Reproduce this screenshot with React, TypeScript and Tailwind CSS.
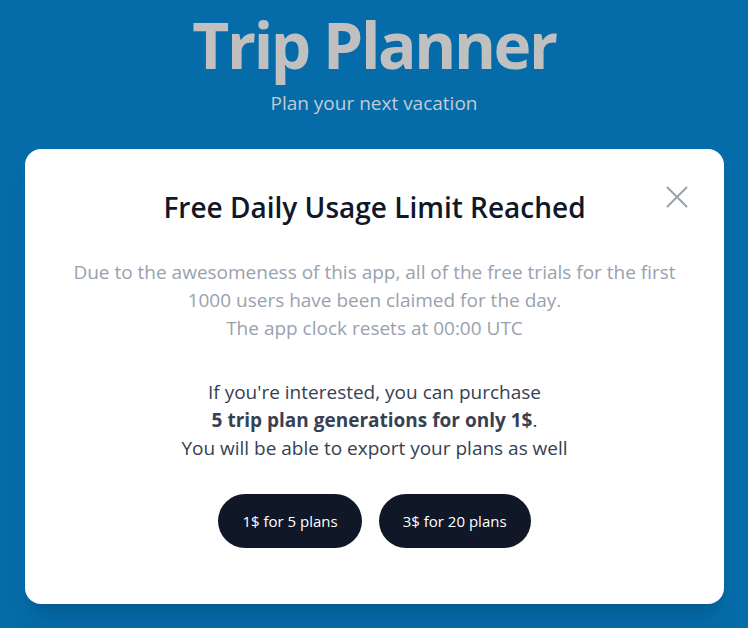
import React from "react";

function CloseIcon() {
  return (
    <svg width="22" height="22" viewBox="0 0 22 22" fill="none" stroke="currentColor" strokeWidth="2" strokeLinecap="round">
      <path d="M1.5 1.5L20.5 20.5M20.5 1.5L1.5 20.5" />
    </svg>
  );
}

export default function App() {
  return (
    <div
      className="min-h-screen bg-[#056ca9] flex flex-col items-center"
      style={{ fontFamily: "'Open Sans', sans-serif" }}
    >
      <h1 className="mt-[13px] text-[64px] font-bold leading-none tracking-[-2.4px] text-[#c0c0c0]">
        Trip Planner
      </h1>
      <p className="mt-[12px] text-[19px] leading-7 text-[#c3cbd3]">Plan your next vacation</p>
      <div className="relative mt-[32px] self-stretch ml-[25px] mr-[24px] rounded-2xl bg-white shadow-xl pt-[40px] pb-[56px] px-8 text-center">
        <button className="absolute right-[36px] top-[37px] text-gray-400">
          <CloseIcon />
        </button>
        <h2 className="text-[28px] leading-9 font-semibold text-gray-900">Free Daily Usage Limit Reached</h2>
        <p className="mt-[33px] text-[19px] leading-7 text-gray-400">
          Due to the awesomeness of this app, all of the free trials for the first
          <br />
          1000 users have been claimed for the day.
          <br />
          The app clock resets at 00:00 UTC
        </p>
        <p className="mt-[36px] text-[19px] leading-7 text-gray-700">
          If you're interested, you can purchase
          <br />
          <span className="font-bold">5 trip plan generations for only 1$</span>.
          <br />
          You will be able to export your plans as well
        </p>
        <div className="mt-[32px] flex justify-center gap-[17px]">
          <button className="rounded-full bg-gray-900 px-6 py-[15px] text-[15px] leading-6 text-white">1$ for 5 plans</button>
          <button className="rounded-full bg-gray-900 px-6 py-[15px] text-[15px] leading-6 text-white">3$ for 20 plans</button>
        </div>
      </div>
    </div>
  );
}
